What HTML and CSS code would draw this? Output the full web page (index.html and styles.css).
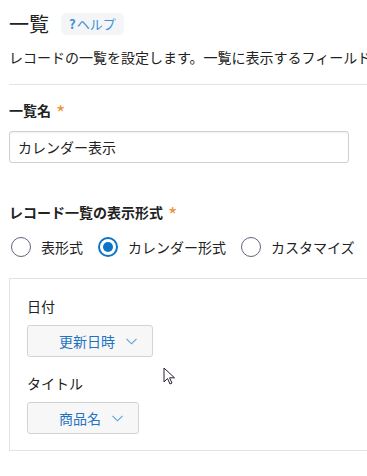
FILE: index.html
```html
<!DOCTYPE html>
<html lang="ja">
<head>
    <meta charset="UTF-8">
    <meta name="viewport" content="width=device-width, initial-scale=1.0">
    <title>一覧</title>
    <link rel="stylesheet" href="styles.css">
</head>

<body>
    <div class="page">
        <div class="title">
            <h1>一覧</h1>
            <a class="help" href="#"><span class="help-q">?</span>ヘルプ</a>
        </div>
        <p class="desc">レコードの一覧を設定します。一覧に表示するフィールドを選択してください。</p>

        <hr class="divider">

        <div class="field">
            <div class="label">一覧名<span class="required">*</span></div>
            <input class="text-input" type="text" value="カレンダー表示">
        </div>

        <div class="field field-format">
            <div class="label">レコード一覧の表示形式<span class="required">*</span></div>
            <div class="radios">
                <label class="radio"><span class="radio-mark"></span>表形式</label>
                <label class="radio checked"><span class="radio-mark"></span>カレンダー形式</label>
                <label class="radio"><span class="radio-mark"></span>カスタマイズ</label>
            </div>
        </div>

        <div class="calendar-box">
            <div class="sub-label">日付</div>
            <button class="select">更新日時
                <svg width="11" height="7" viewBox="0 0 11 7"><path d="M0.5 0.8 L5.5 5.8 L10.5 0.8" fill="none" stroke="#5aa0dd" stroke-width="1.1"/></svg>
            </button>

            <div class="sub-label second">タイトル</div>
            <button class="select">商品名
                <svg width="11" height="7" viewBox="0 0 11 7"><path d="M0.5 0.8 L5.5 5.8 L10.5 0.8" fill="none" stroke="#5aa0dd" stroke-width="1.1"/></svg>
            </button>

            <svg class="cursor" width="14" height="20" viewBox="0 0 14 20">
                <path d="M1 1 L1 15 L4.5 11.5 L7 17 L9 16 L6.5 10.8 L11.5 10.8 Z" fill="#fff" stroke="#2a1f33" stroke-width="1"/>
            </svg>
        </div>
    </div>
</body>
</html>
```

FILE: styles.css
```css
body {
    margin: 0;
    padding: 0;
    background-color: #fff;
    font-family: "Noto Sans CJK JP", "Noto Sans", sans-serif;
    color: #222;
    overflow: hidden;
}

.page {
    padding: 10px 0 0 9px;
}

.title {
    display: flex;
    align-items: center;
    height: 28px;
}

.title h1 {
    margin: 0;
    font-size: 20px;
    font-weight: normal;
    line-height: 28px;
}

.help {
    margin-left: 12px;
    padding: 2px 8px 2px 8px;
    background-color: #f4f5f6;
    border-radius: 6px;
    color: #3f8fd6;
    font-size: 13px;
    line-height: 18px;
    text-decoration: none;
}

.help-q {
    font-weight: bold;
    margin-right: 1px;
}

.desc {
    margin: 8px 0 0;
    font-size: 14px;
    line-height: 22px;
    white-space: nowrap;
}

.divider {
    margin: 16px 0 0;
    border: none;
    border-top: 1px solid #e3e3e3;
    width: 400px;
}

.field {
    margin-top: 14px;
}

.label {
    font-size: 14px;
    font-weight: bold;
    line-height: 22px;
    white-space: nowrap;
}

.required {
    color: #e8943a;
    margin-left: 5px;
    font-size: 20px;
    line-height: 14px;
    font-weight: normal;
    vertical-align: -5px;
}

.text-input {
    display: block;
    box-sizing: border-box;
    margin-top: 10px;
    width: 340px;
    height: 32px;
    padding: 0 8px;
    border: 1px solid #d0d0d0;
    border-radius: 3px;
    box-shadow: inset 0 1px 2px rgba(0, 0, 0, 0.06);
    font-family: inherit;
    font-size: 14px;
    color: #222;
}

.field-format {
    margin-top: 38px;
}

.radios {
    display: flex;
    align-items: center;
    margin-top: 13px;
    margin-left: 2px;
    white-space: nowrap;
}

.radio {
    display: flex;
    align-items: center;
    flex-shrink: 0;
    font-size: 14px;
    line-height: 22px;
    margin-right: 15px;
}

.radio-mark {
    box-sizing: border-box;
    flex-shrink: 0;
    width: 20px;
    height: 20px;
    margin-right: 10px;
    border: 1px solid #6d5d80;
    border-radius: 50%;
    position: relative;
}

.radio.checked .radio-mark {
    border: 2px solid #0b74c8;
}

.radio.checked .radio-mark::after {
    content: "";
    position: absolute;
    left: 3px;
    top: 3px;
    width: 10px;
    height: 10px;
    border-radius: 50%;
    background-color: #0b74c8;
}

.calendar-box {
    position: relative;
    margin-top: 20px;
    width: 420px;
    box-sizing: border-box;
    padding: 16px 17px 16px 17px;
    border: 1px solid #e3e3e3;
}

.sub-label {
    font-size: 14px;
    line-height: 22px;
}

.sub-label.second {
    margin-top: 15px;
}

.select {
    display: flex;
    align-items: center;
    gap: 11px;
    margin-top: 8px;
    height: 32px;
    padding: 0 15px 0 31px;
    background-color: #f7f7f7;
    border: 1px solid #d3d3d3;
    border-radius: 3px;
    color: #1f74c2;
    font-family: inherit;
    font-size: 14px;
}

.cursor {
    position: absolute;
    left: 153px;
    top: 88px;
}
```
